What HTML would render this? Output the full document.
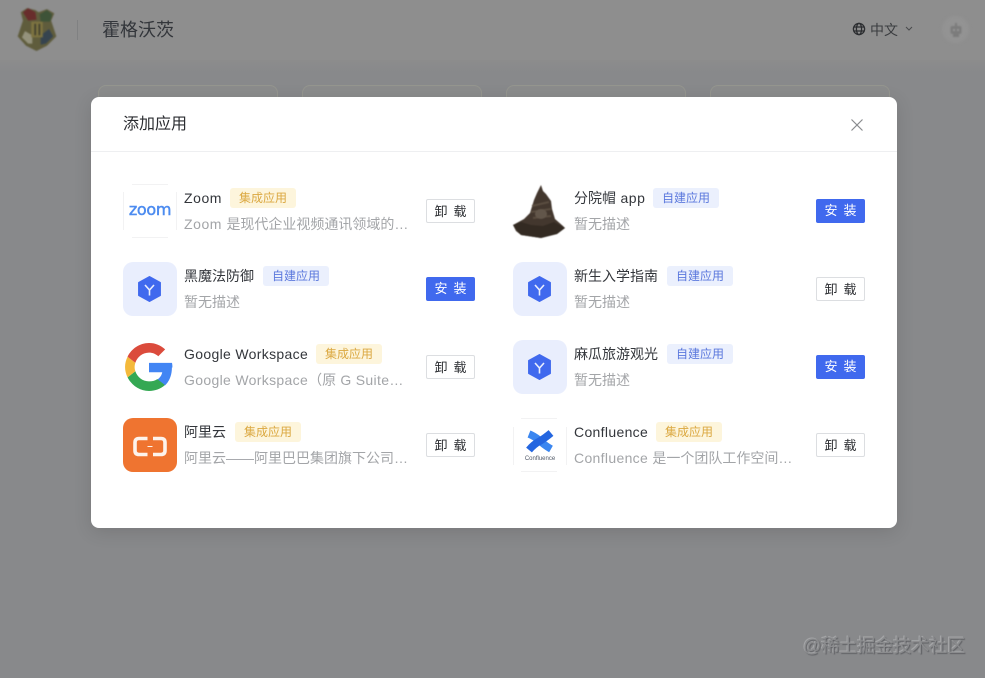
<!DOCTYPE html>
<html lang="zh">
<head>
<meta charset="utf-8">
<style>
html,body{margin:0;padding:0}
body{width:985px;height:678px;overflow:hidden;position:relative;background:#88898b;font-family:"Liberation Sans","Noto Sans CJK SC",sans-serif}
#w{position:absolute;left:0;top:0;width:985px;height:678px;filter:blur(.35px)}
.abs{position:absolute}
.hdr{left:0;top:0;width:985px;height:60px;background:#8e8e8e}
.hdrshade{left:0;top:60px;width:985px;height:12px;background:linear-gradient(#8c8c8c,#88898b)}
.card{top:85px;width:180px;height:40px;box-sizing:border-box;border:1px solid #95968f;border-bottom:none;border-radius:8px 8px 0 0;background:#8b8c8c}
.modal{left:91px;top:97px;width:806px;height:431px;background:#fff;border-radius:8px;box-shadow:0 4px 18px rgba(0,0,0,.12)}
.line{left:91px;top:151px;width:806px;height:1px;background:#eeeff1}
.name{font-size:14px;line-height:20px;color:#33363b;white-space:nowrap;left:184px}
.desc{font-size:14px;line-height:20px;color:#a3a5a8;white-space:nowrap}
.l{letter-spacing:.33px}
.l5{letter-spacing:.55px}
.tag{height:20px;line-height:20px;width:66px;text-align:center;font-size:12px;border-radius:3px}
.y{background:#fdf5dc;color:#dba840}
.b{background:#ebf0fd;color:#5b78dd}
.btn{left:426px;width:49px;height:24px;line-height:23px;box-sizing:border-box;text-align:center;font-size:13px;letter-spacing:6px;text-indent:6px;border-radius:2px}
.un{background:#fff;border:1px solid #dcdee1;color:#2b2d31}
.in{background:#4069ee;color:#fff;line-height:24px}
.ic{width:54px;height:54px;border-radius:10px;background:#e9eefd}
.f{background:#f2f2f3}
svg{display:block}
</style>
</head>
<body>
<div id="w">
<div class="abs hdr"></div>
<div class="abs hdrshade"></div>

<svg class="abs" style="left:14px;top:6px;filter:blur(.7px)" width="45" height="46" viewBox="0 0 42 44">
<path d="M6 6 L12 2 L20 4 L23 6 L31 3 L38 7 L35 14 L40 29 L31 38 L21 43 L11 38 L3 29 L8 14Z" fill="#5f5c3c"/>
<path d="M8 6 L13 2 L20 6 L21 13 L13 14Z" fill="#682d2c"/>
<path d="M24 8 L31 4 L36 8 L34 15 L25 15Z" fill="#3e5338"/>
<path d="M7 30 L10 24 L17 28 L17 36 L13 36Z" fill="#94927c"/>
<path d="M25 28 L33 22 L37 29 L30 36 L25 37Z" fill="#36444f"/>
<rect x="16" y="15" width="11" height="15" fill="#7d7340"/>
<rect x="19" y="17" width="1.500" height="11" fill="#3a3a2c"/>
<rect x="23" y="17" width="1.500" height="11" fill="#3a3a2c"/>
</svg>
<div class="abs" style="left:77px;top:20px;width:1px;height:20px;background:#808182"></div>
<div class="abs" style="left:102px;top:18px;font-size:18px;line-height:24px;color:#33363b;white-space:nowrap">霍格沃茨</div>

<svg class="abs" style="left:852px;top:22px" width="14" height="14" viewBox="0 0 14 14" fill="none" stroke="#2c2e31" stroke-width="1.3">
<circle cx="7" cy="7" r="5.6"/><ellipse cx="7" cy="7" rx="2.6" ry="5.6"/><path d="M1.600 5H12.400M1.600 9H12.400"/>
</svg>
<div class="abs" style="left:870px;top:20px;font-size:14px;line-height:20px;color:#3b3d40;white-space:nowrap">中文</div>
<svg class="abs" style="left:904px;top:25px" width="10" height="8" viewBox="0 0 10 8" fill="none" stroke="#4a4b4d" stroke-width="1"><path d="M2 2 L5 5 L8 2"/></svg>
<div class="abs" style="left:942px;top:16px;width:27px;height:27px;border-radius:50%;background:#939393;filter:blur(1.5px)"></div>
<svg class="abs" style="left:947px;top:21px;filter:blur(.8px)" width="18" height="18" viewBox="0 0 18 18"><rect x="3.500" y="5" width="11" height="8" rx="2" fill="#7c7c7c"/><rect x="8" y="2" width="2" height="3" fill="#7c7c7c"/><rect x="6" y="13" width="6" height="3" fill="#7c7c7c"/><rect x="6" y="8" width="2" height="2" fill="#979797"/><rect x="10" y="8" width="2" height="2" fill="#979797"/></svg>

<div class="abs card" style="left:98px"></div>
<div class="abs card" style="left:302px"></div>
<div class="abs card" style="left:506px"></div>
<div class="abs card" style="left:710px"></div>

<div class="abs modal"></div>
<div class="abs line"></div>
<div class="abs" style="left:123px;top:114px;font-size:16px;line-height:22px;color:#2b2d31;white-space:nowrap">添加应用</div>
<svg class="abs" style="left:850px;top:118px" width="14" height="14" viewBox="0 0 14 14" fill="none" stroke="#8a8c8f" stroke-width="1.2"><path d="M1.500 1.500 L12.500 12.500 M12.500 1.500 L1.500 12.500"/></svg>

<!-- Zoom -->
<div class="abs f" style="left:132px;top:184px;width:36px;height:1px"></div>
<div class="abs f" style="left:132px;top:237px;width:36px;height:1px"></div>
<div class="abs f" style="left:123px;top:192px;width:1px;height:38px"></div>
<div class="abs f" style="left:176px;top:192px;width:1px;height:38px"></div>
<div class="abs" style="left:123px;top:199px;width:54px;text-align:center;font-family:'DejaVu Sans',sans-serif;font-size:16px;line-height:22px;color:#4d8cf0;letter-spacing:-.3px;-webkit-text-stroke:.5px #4d8cf0">zoom</div>
<div class="abs name" style="top:188px"><span class="l5">Zoom</span></div>
<div class="abs tag y" style="left:230px;top:188px">集成应用</div>
<div class="abs desc" style="left:184px;top:214px"><span class="l5">Zoom </span>是现代企业视频通讯领域的…</div>
<div class="abs btn un" style="top:199px">卸载</div>

<!-- 黑魔法防御 -->
<div class="abs ic" style="left:123px;top:262px"></div>
<svg class="abs" style="left:137px;top:275px" width="26" height="28" viewBox="0 0 26 28"><path d="M12.500 1.800 L23.200 7.600 V20.400 L12.500 26.200 L1.800 20.400 V7.600Z" fill="#4069ee" stroke="#4069ee" stroke-linejoin="round" stroke-width="1.5"/><path d="M8 10 L12.500 15 L17 10 M12.500 15 V20.500" fill="none" stroke="#e9eefd" stroke-width="1.6"/></svg>
<div class="abs name" style="top:266px">黑魔法防御</div>
<div class="abs tag b" style="left:263px;top:266px">自建应用</div>
<div class="abs desc" style="left:184px;top:292px">暂无描述</div>
<div class="abs btn in" style="top:277px">安装</div>

<!-- Google -->
<svg class="abs" style="left:124px;top:342px" width="50" height="50" viewBox="0 0 48 48">
<path fill="#4285F4" d="M46.500 24.500c0-1.600-.1-3.100-.4-4.500H24v9h12.700c-.5 2.900-2.200 5.400-4.700 7l7.300 5.700c4.300-4 6.700-9.900 6.700-17.200z"/>
<path fill="#34A853" d="M24 47c6.200 0 11.400-2.100 15.300-5.700L32 35.600c-2.100 1.400-4.700 2.200-8 2.200-6.100 0-11.300-4.100-13.100-9.700l-7.500 5.800C7.200 41.500 15 47 24 47z"/>
<path fill="#F4B93B" d="M10.900 28.100c-.5-1.400-.7-2.800-.7-4.100s.3-2.800.7-4.100l-7.500-5.800C1.900 17.200 1 20.500 1 24s.9 6.800 2.400 9.900z"/>
<path fill="#DB4B3C" d="M24 10.200c3.400 0 6.500 1.200 8.900 3.500l6.600-6.600C35.400 3.300 30.200 1 24 1 15 1 7.200 6.500 3.400 14.100l7.500 5.800C12.700 14.300 17.900 10.200 24 10.200z"/>
</svg>
<div class="abs name" style="top:344px"><span class="l">Google Workspace</span></div>
<div class="abs tag y" style="left:316px;top:344px">集成应用</div>
<div class="abs desc" style="left:184px;top:370px"><span class="l">Google Workspace</span>（原<span class="l"> G Suite…</span></div>
<div class="abs btn un" style="top:355px">卸载</div>

<!-- 阿里云 -->
<div class="abs" style="left:123px;top:418px;width:54px;height:54px;border-radius:10px;background:#ef7430"></div>
<svg class="abs" style="left:133px;top:436px" width="34" height="22" viewBox="0 0 34 22" fill="none" stroke="#fdf3ec" stroke-width="3.6"><path d="M14.500 2.500H6 Q2 2.500 2 6.500V14.500 Q2 18.500 6 18.500H14.500M20 2.500H28 Q32 2.500 32 6.500V14.500 Q32 18.500 28 18.500H20"/><path d="M14.500 10.500H19.500" stroke-width="1"/></svg>
<div class="abs name" style="top:422px">阿里云</div>
<div class="abs tag y" style="left:235px;top:422px">集成应用</div>
<div class="abs desc" style="left:184px;top:448px">阿里云——阿里巴巴集团旗下公司…</div>
<div class="abs btn un" style="top:433px">卸载</div>

<!-- Hat -->
<svg class="abs" style="left:513px;top:184px;filter:blur(.5px)" width="54" height="54" viewBox="0 0 54 54">
<path d="M28 1 L24 9 L21 16 L17 29 L11 35 L0 41 L3 47 L8 51 L28 54 L44 50 L52 44 L50 42 L42 35 L39 25 L38 17 L33 10 L30 7Z" fill="#43372e"/>
<path d="M0 41 L8 38 L18 41 L30 42 L41 38 L52 44 L44 50 L28 54 L8 51Z" fill="#332a22"/>
<path d="M19 22 L36 18 M18 28 L38 25 M20 34 L38 32" stroke="#5a4d40" stroke-width="2" fill="none"/>
<ellipse cx="28" cy="30" rx="6" ry="5" fill="#62564a"/>
</svg>
<div class="abs name" style="left:574px;top:188px">分院帽<span class="l5"> app</span></div>
<div class="abs tag b" style="left:653px;top:188px">自建应用</div>
<div class="abs desc" style="left:574px;top:214px">暂无描述</div>
<div class="abs btn in" style="left:816px;top:199px">安装</div>

<!-- 新生入学指南 -->
<div class="abs ic" style="left:513px;top:262px"></div>
<svg class="abs" style="left:527px;top:275px" width="26" height="28" viewBox="0 0 26 28"><path d="M12.500 1.800 L23.200 7.600 V20.400 L12.500 26.200 L1.800 20.400 V7.600Z" fill="#4069ee" stroke="#4069ee" stroke-linejoin="round" stroke-width="1.5"/><path d="M8 10 L12.500 15 L17 10 M12.500 15 V20.500" fill="none" stroke="#e9eefd" stroke-width="1.6"/></svg>
<div class="abs name" style="left:574px;top:266px">新生入学指南</div>
<div class="abs tag b" style="left:667px;top:266px">自建应用</div>
<div class="abs desc" style="left:574px;top:292px">暂无描述</div>
<div class="abs btn un" style="left:816px;top:277px">卸载</div>

<!-- 麻瓜旅游观光 -->
<div class="abs ic" style="left:513px;top:340px"></div>
<svg class="abs" style="left:527px;top:353px" width="26" height="28" viewBox="0 0 26 28"><path d="M12.500 1.800 L23.200 7.600 V20.400 L12.500 26.200 L1.800 20.400 V7.600Z" fill="#4069ee" stroke="#4069ee" stroke-linejoin="round" stroke-width="1.5"/><path d="M8 10 L12.500 15 L17 10 M12.500 15 V20.500" fill="none" stroke="#e9eefd" stroke-width="1.6"/></svg>
<div class="abs name" style="left:574px;top:344px">麻瓜旅游观光</div>
<div class="abs tag b" style="left:667px;top:344px">自建应用</div>
<div class="abs desc" style="left:574px;top:370px">暂无描述</div>
<div class="abs btn in" style="left:816px;top:355px">安装</div>

<!-- Confluence -->
<div class="abs f" style="left:521px;top:418px;width:36px;height:1px"></div>
<div class="abs f" style="left:521px;top:471px;width:36px;height:1px"></div>
<div class="abs f" style="left:513px;top:427px;width:1px;height:38px"></div>
<div class="abs f" style="left:566px;top:427px;width:1px;height:38px"></div>
<svg class="abs" style="left:526px;top:428px" width="28" height="27" viewBox="0 0 28 27" fill="none" stroke-width="7.5">
<path d="M3 6 Q8 8 13 12 Q18 17 25 21" stroke="#3a86f0"/>
<path d="M25 5 Q19 10 14 13 Q8 16 3 22" stroke="#2466e0"/>
</svg>
<div class="abs" style="left:513px;top:455px;width:54px;text-align:center;font-size:6px;line-height:8px;color:#4f5766">Confluence</div>
<div class="abs name" style="left:574px;top:422px"><span class="l">Confluence</span></div>
<div class="abs tag y" style="left:656px;top:422px">集成应用</div>
<div class="abs desc" style="left:574px;top:448px"><span class="l">Confluence </span>是一个团队工作空间…</div>
<div class="abs btn un" style="left:816px;top:433px">卸载</div>

<!-- Watermark -->
<div class="abs" style="left:803px;top:635px;font-size:18px;line-height:22px;color:#8b8c8e;white-space:nowrap;text-shadow:1px 1px 1px #5e5f63,-1px -1px 0 #a4a5a7">@稀土掘金技术社区</div>
</div>
</body>
</html>
